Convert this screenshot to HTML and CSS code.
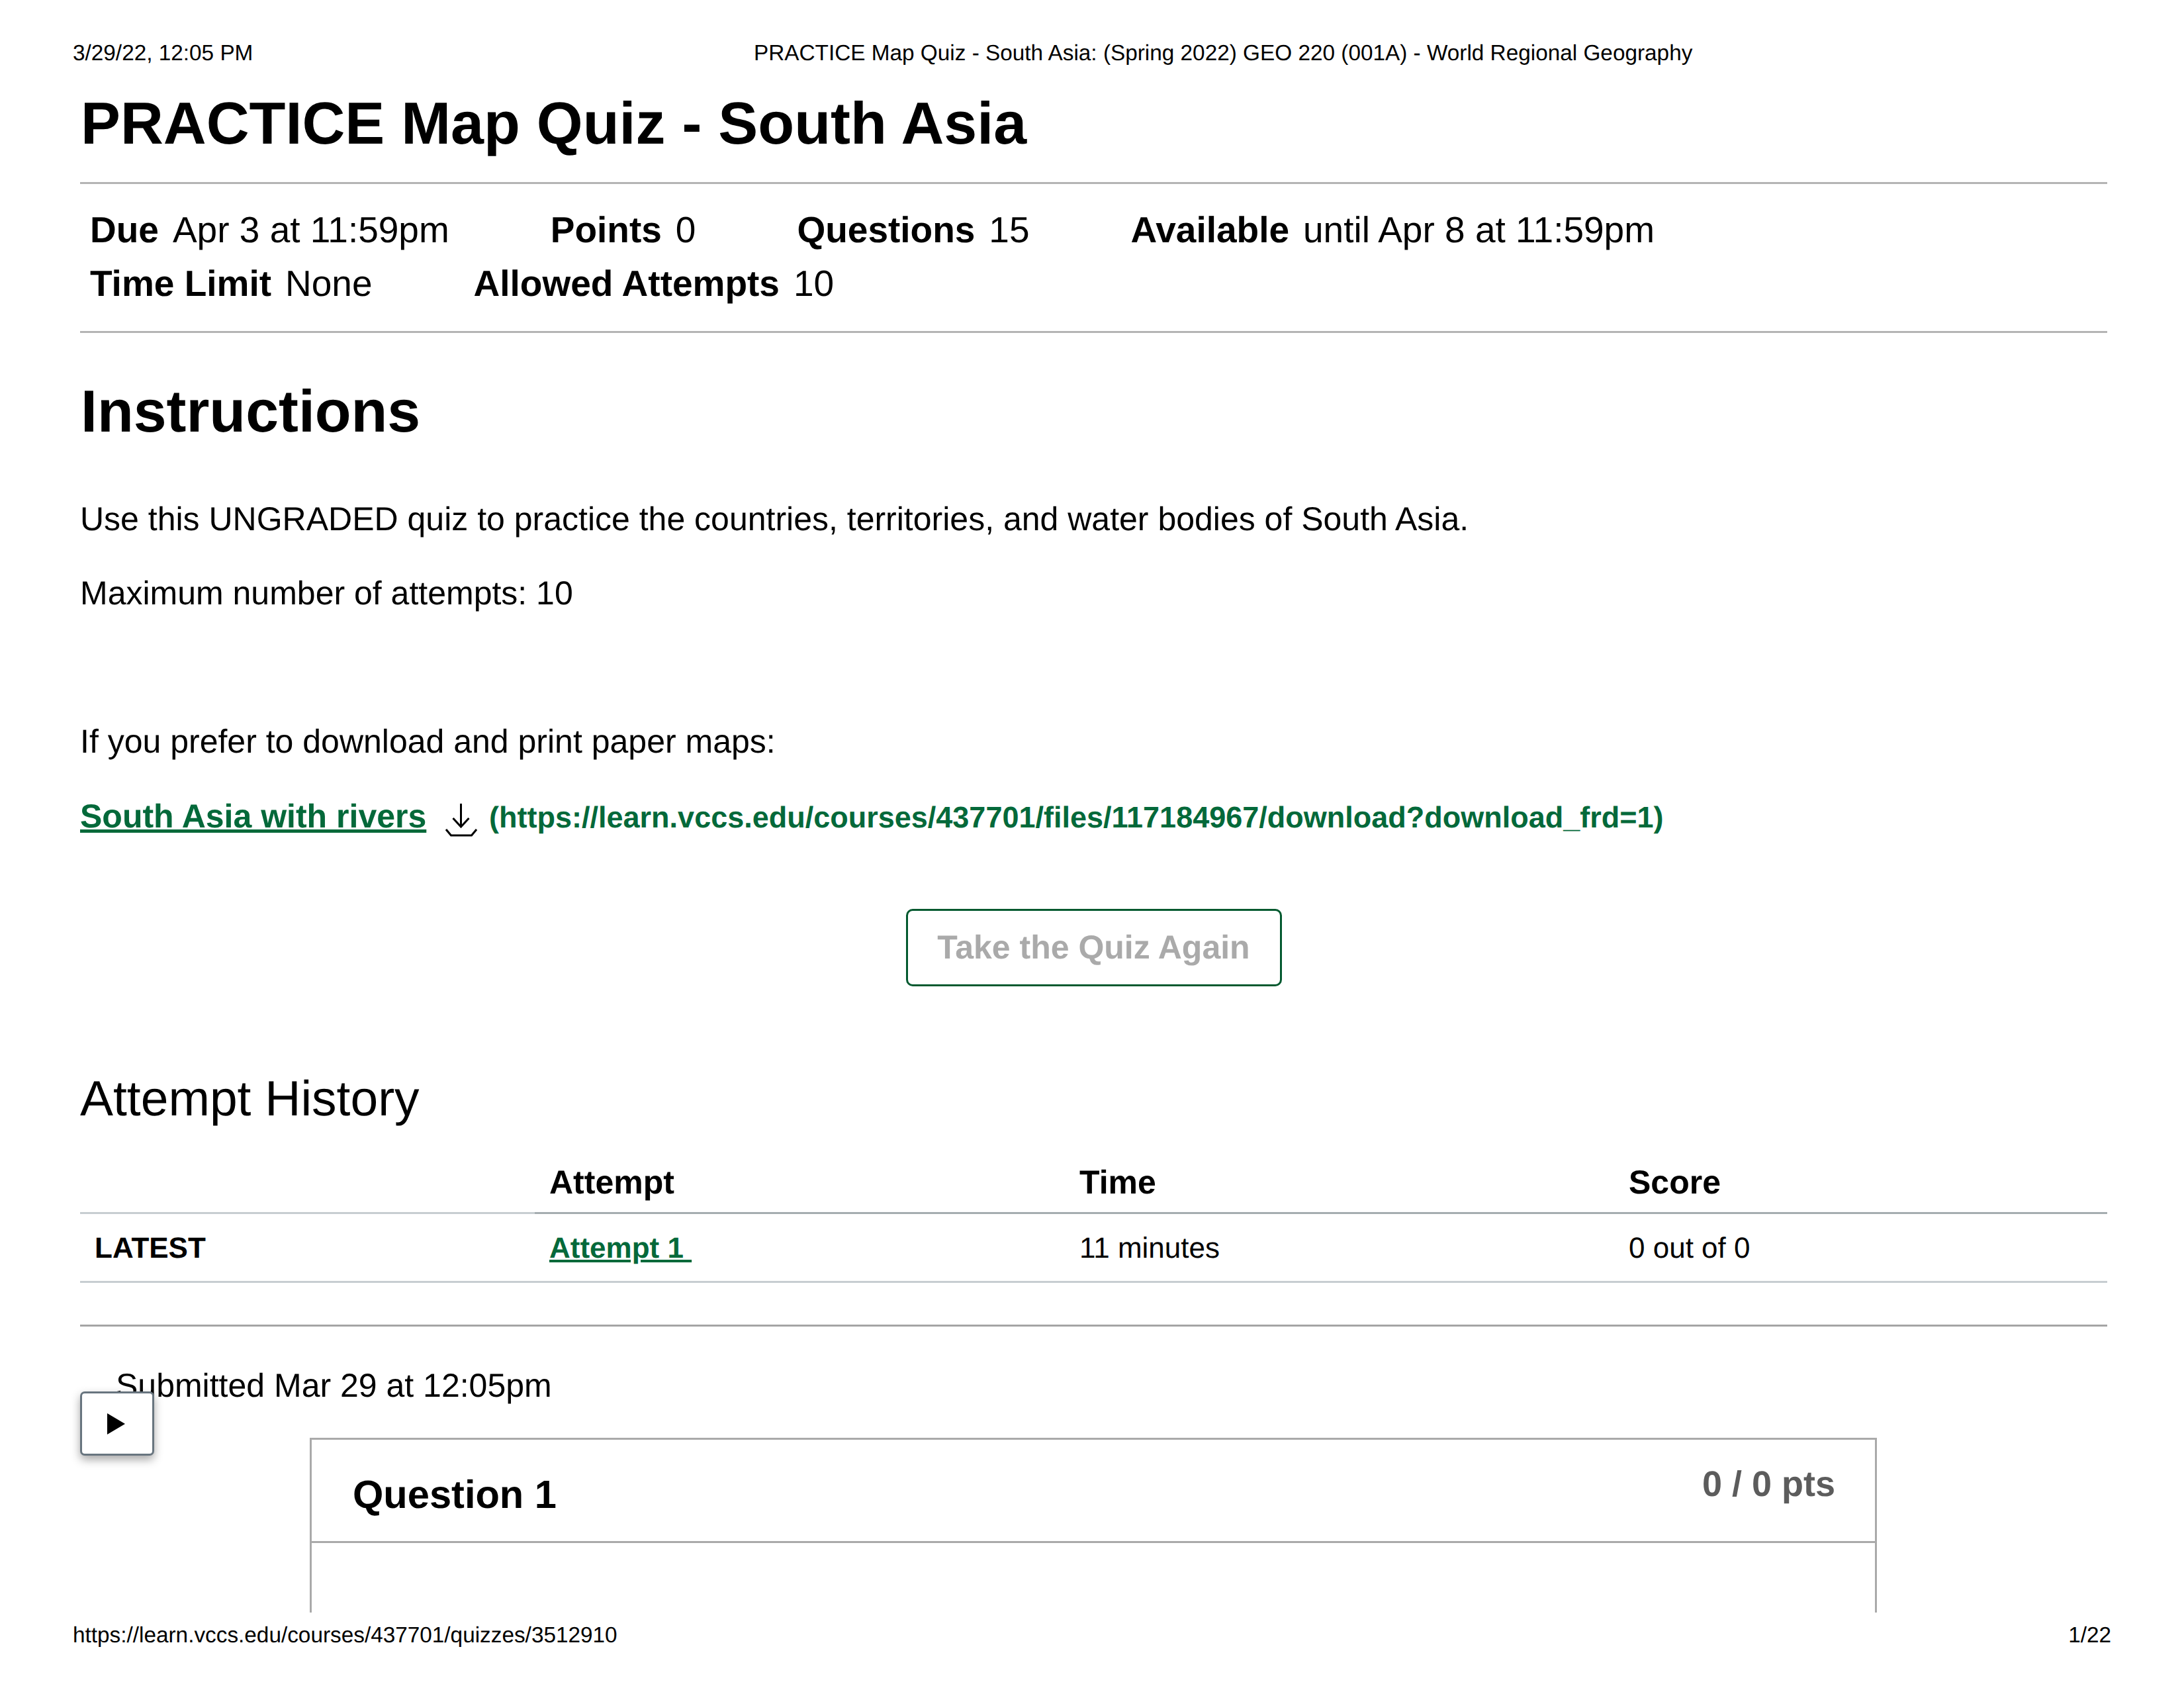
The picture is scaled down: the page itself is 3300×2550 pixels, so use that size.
FILE: index.html
```html
<!DOCTYPE html>
<html lang="en">
<head>
  <meta charset="UTF-8">
  <link rel="stylesheet" href="styles.css">
  <title>PRACTICE Map Quiz - South Asia</title>
</head>
<body>
  <header class="print-header">
    <span class="print-date">3/29/22, 12:05 PM</span>
    <span class="print-title">PRACTICE Map Quiz - South Asia: (Spring 2022) GEO 220 (001A) - World Regional Geography</span>
  </header>

  <main class="page">
    <h1 class="quiz-title">PRACTICE Map Quiz - South Asia</h1>

    <div class="quiz-meta">
      <div class="meta-item"><b>Due</b><span>Apr 3 at 11:59pm</span></div>
      <div class="meta-item"><b>Points</b><span>0</span></div>
      <div class="meta-item"><b>Questions</b><span>15</span></div>
      <div class="meta-item"><b>Available</b><span>until Apr 8 at 11:59pm</span></div>
      <div class="meta-item"><b>Time Limit</b><span>None</span></div>
      <div class="meta-item"><b>Allowed Attempts</b><span>10</span></div>
    </div>

    <h2 class="instructions-title">Instructions</h2>
    <div class="instructions">
      <p>Use this UNGRADED quiz to practice the countries, territories, and water bodies of South Asia.</p>
      <p>Maximum number of attempts: 10</p>
      <p>&nbsp;</p>
      <p>If you prefer to download and print paper maps:</p>
      <p class="file-link">
        <a href="#">South Asia with rivers</a>
        <svg class="download-icon" width="48" height="50" viewBox="0 0 48 50">
          <path d="M23.5 0V34M11.5 22L23.5 35L35.5 22M1 39L8.500 48H39.500L47 39" fill="none" stroke="#000" stroke-width="3"/>
        </svg>
        <span class="file-url">(https://learn.vccs.edu/courses/437701/files/117184967/download?download_frd=1)</span>
      </p>
    </div>

    <div class="take-quiz">
      <a class="take-quiz-btn" href="#">Take the Quiz Again</a>
    </div>

    <h2 class="history-title">Attempt History</h2>
    <table class="history">
      <thead>
        <tr>
          <th class="col-tag"></th>
          <th class="col-attempt">Attempt</th>
          <th class="col-time">Time</th>
          <th class="col-score">Score</th>
        </tr>
      </thead>
      <tbody>
        <tr>
          <td class="latest">LATEST</td>
          <td><a href="#">Attempt 1&nbsp;</a></td>
          <td>11 minutes</td>
          <td>0 out of 0</td>
        </tr>
      </tbody>
    </table>

    <hr class="history-rule">
    <div class="submitted">Submitted Mar 29 at 12:05pm</div>

    <button class="play-btn" type="button">
      <svg width="27" height="32" viewBox="0 0 27 32"><path d="M0 0L27 16L0 32Z" fill="#000"/></svg>
    </button>

    <section class="question">
      <div class="question-header">
        <span class="question-name">Question 1</span>
        <span class="question-pts">0 / 0 pts</span>
      </div>
      <div class="question-body"></div>
    </section>
  </main>

  <footer class="print-footer">
    <span>https://learn.vccs.edu/courses/437701/quizzes/3512910</span>
    <span>1/22</span>
  </footer>
</body>
</html>
```

FILE: styles.css
```css
body {
  display: flex;
  flex-direction: column;
  width: 3300px;
  height: 2550px;
  margin: 0;
  overflow: hidden;
  font-family: 'Liberation Sans', Arial, sans-serif;
  font-size: 50px;
  color: #000;
  background-color: #fff;
  text-rendering: geometricPrecision;
}

a {
  color: #04693a;
}

.print-header {
  position: relative;
  height: 100px;
  padding: 61px 0 0 110px;
  box-sizing: border-box;
  font-size: 33.33px;
  line-height: 40px;
}

.print-title {
  position: absolute;
  left: 1139px;
  top: 61px;
}

.print-footer {
  display: flex;
  justify-content: space-between;
  height: 114px;
  padding: 15px 110px 0;
  box-sizing: border-box;
  font-size: 33.33px;
  line-height: 40px;
}

.page {
  position: relative;
  height: 2336px;
  padding: 0 116px 0 121px;
  overflow: hidden;
}

.quiz-title {
  margin: 37px 0 38px 1px;
  font-size: 89.85px;
  line-height: 100px;
}

.quiz-meta {
  display: flex;
  flex-wrap: wrap;
  column-gap: 153px;
  padding: 29px 300px 31px 15px;
  border-top: 3px solid #b4b4b4;
  border-bottom: 3px solid #b4b4b4;
  font-size: 55px;
  line-height: 81px;
}

.meta-item b {
  margin-right: 21px;
}

.instructions-title {
  margin: 69px 0 0 1px;
  font-size: 89.7px;
  line-height: 100px;
}

.instructions {
  margin-top: 77px;
  line-height: 70px;
}

.instructions p {
  margin: 0 0 42px;
}

.instructions .file-link {
  margin-top: 43px;
  font-weight: bold;
  color: #04693a;
}

.download-icon {
  margin: 0 4px 0 15px;
  vertical-align: -14px;
}

.file-url {
  font-size: 45px;
}

.take-quiz {
  margin-top: 103px;
  text-align: center;
}

.take-quiz-btn {
  display: inline-block;
  width: 568px;
  height: 117px;
  box-sizing: border-box;
  border: 3px solid #03592f;
  border-radius: 10px;
  font-weight: bold;
  line-height: 111px;
  color: #aaa;
  text-decoration: none;
}

.history-title {
  margin: 124px 0 0;
  font-size: 75px;
  font-weight: normal;
  line-height: 90px;
}

.history {
  width: 100%;
  margin-top: 38px;
  border-collapse: collapse;
  table-layout: fixed;
  font-size: 44px;
}

.history th {
  height: 87px;
  padding: 0 22px 2px;
  border-bottom: 3px solid #a5adb0;
  font-size: 50px;
  text-align: left;
}

.history th.col-tag {
  width: 643px;
  border-bottom-color: #c7cdd1;
}

.col-attempt {
  width: 757px;
}

.col-time {
  width: 786px;
}

.history td {
  height: 98px;
  padding: 3px 22px 0;
  border-bottom: 3px solid #c7cdd1;
}

.history td.latest {
  font-weight: bold;
}

.history td a {
  font-weight: bold;
}

.history-rule {
  height: 3px;
  margin: 63px 0 0;
  border: 0;
  background-color: #a5a5a5;
}

.submitted {
  margin-top: 54px;
  padding-left: 54px;
  line-height: 70px;
}

.play-btn {
  position: absolute;
  left: 121px;
  top: 2002px;
  display: flex;
  align-items: center;
  justify-content: center;
  width: 112px;
  height: 97px;
  padding: 0 4px 0 0;
  background-color: #fff;
  border: 3px solid #68757f;
  border-radius: 7px;
  box-shadow: 0 6px 14px rgba(0, 0, 0, 0.35);
}

.question {
  width: 2368px;
  height: 400px;
  margin: 44px 0 0 347px;
  box-sizing: border-box;
  border: 3px solid #aaa;
}

.question-header {
  display: flex;
  justify-content: space-between;
  height: 153px;
  padding: 0 60px 0 62px;
  border-bottom: 3px solid #aaa;
}

.question-name {
  margin-top: 46px;
  font-size: 59.6px;
  font-weight: bold;
  line-height: 74px;
}

.question-pts {
  margin-top: 32px;
  font-size: 54px;
  font-weight: bold;
  line-height: 70px;
  color: #5c5c5c;
}
```
